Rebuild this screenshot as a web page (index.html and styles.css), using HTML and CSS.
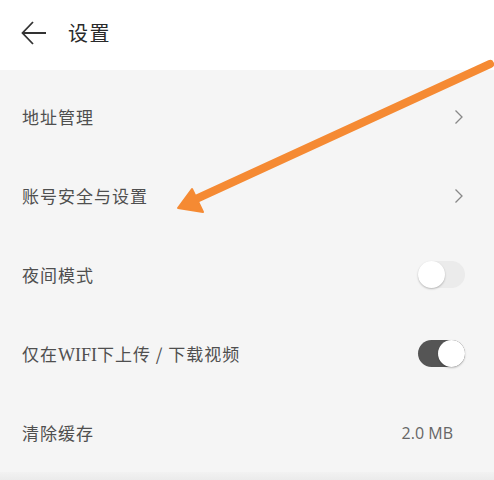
FILE: index.html
```html
<!DOCTYPE html>
<html lang="zh">
<head>
<meta charset="utf-8">
<link rel="stylesheet" href="styles.css">
</head>
<body>
<div class="page">
  <header class="topbar">
    <svg class="back" width="26" height="24" viewBox="0 0 26 24"><path d="M25 12H2M12 1L1.5 12 12 23" fill="none" stroke="#333" stroke-width="1.8"/></svg>
    <span class="title">设置</span>
  </header>
  <main class="list">
    <div class="row"><span class="label">地址管理</span><svg class="chev" width="10" height="16" viewBox="0 0 10 16"><path d="M1.5 1.5L8 8 1.5 14.5" fill="none" stroke="#888" stroke-width="1.3"/></svg></div>
    <div class="row"><span class="label">账号安全与设置</span><svg class="chev" width="10" height="16" viewBox="0 0 10 16"><path d="M1.5 1.5L8 8 1.5 14.5" fill="none" stroke="#888" stroke-width="1.3"/></svg></div>
    <div class="row"><span class="label">夜间模式</span><span class="switch"><span class="knob"></span></span></div>
    <div class="row"><span class="label">仅在<span class="latin">WIFI</span>下上传 / 下载视频</span><span class="switch on"><span class="knob"></span></span></div>
    <div class="row"><span class="label">清除缓存</span><span class="value">2.0 MB</span></div>
  </main>
  <div class="bottom"></div>
  <svg class="arrow" width="494" height="480" viewBox="0 0 494 480">
    <line x1="490" y1="64" x2="196" y2="199" stroke="#f58a33" stroke-width="8" stroke-linecap="round"/>
    <polygon points="178,208 192,189 203,212" fill="#f58a33" stroke="#f58a33" stroke-width="2" stroke-linejoin="round"/>
  </svg>
</div>
</body>
</html>
```
FILE: styles.css
```css
html, body {
  margin: 0;
  padding: 0;
}
body {
  width: 494px;
  height: 480px;
  overflow: hidden;
  background: #f5f5f5;
  font-family: "Noto Sans CJK SC", "Noto Sans", sans-serif;
}
.page {
  position: relative;
  width: 494px;
  height: 480px;
  display: flex;
  flex-direction: column;
}
.topbar {
  height: 70px;
  background: #ffffff;
  display: flex;
  align-items: center;
  padding-left: 21px;
  gap: 21px;
  box-sizing: border-box;
  padding-bottom: 5px;
}
.back {
  display: block;
}
.title {
  font-size: 20px;
  color: #2a2a2a;
  letter-spacing: 1.5px;
}
.list {
  padding-top: 7px;
  display: flex;
  flex-direction: column;
}
.row {
  height: 79px;
  display: flex;
  align-items: center;
  justify-content: space-between;
  padding: 0 29px 0 22px;
  box-sizing: border-box;
}
.label {
  font-size: 17px;
  color: #4f4f4f;
  letter-spacing: 1px;
}
.latin {
  font-family: "Liberation Serif", serif;
  font-size: 18px;
  letter-spacing: 0;
}
.chev {
  display: block;
  margin-right: 1px;
}
.switch {
  position: relative;
  width: 47px;
  height: 27px;
  border-radius: 14px;
  background: #ebebeb;
}
.switch .knob {
  position: absolute;
  top: 0;
  left: 0;
  width: 27px;
  height: 27px;
  border-radius: 50%;
  background: #fff;
  box-shadow: 0 1px 2px rgba(0,0,0,0.25);
}
.switch.on {
  background: #555;
}
.switch.on .knob {
  left: 20px;
}
.value {
  font-family: "Open Sans", "Noto Sans", sans-serif;
  font-size: 16px;
  color: #666;
  margin-right: 12px;
}
.bottom {
  flex: 1;
  background: linear-gradient(#f2f2f2, #ebebeb);
}
.arrow {
  position: absolute;
  left: 0;
  top: 0;
  pointer-events: none;
}
```
